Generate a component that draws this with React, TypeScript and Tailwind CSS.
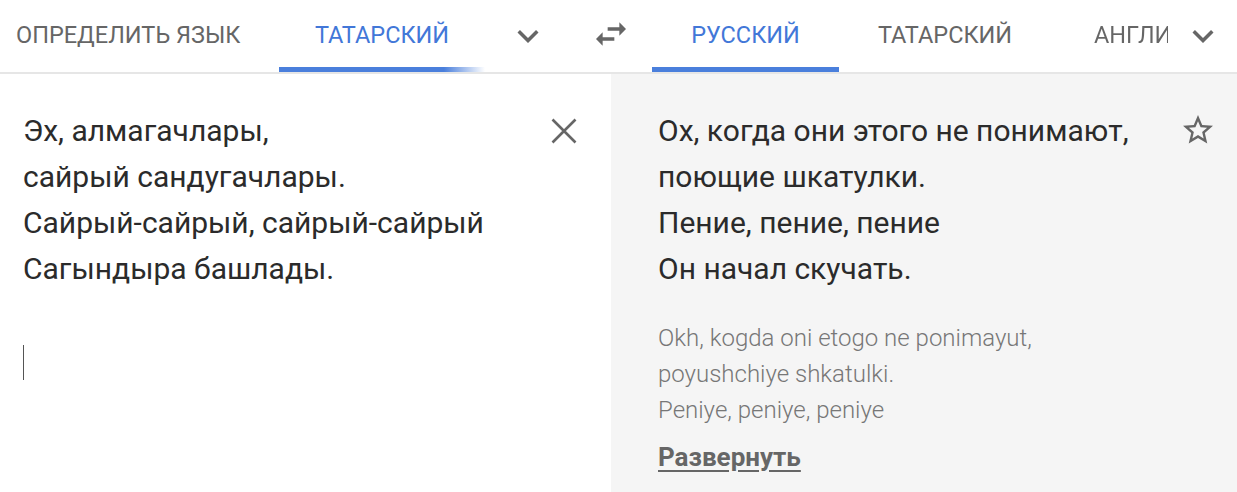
const sans = "font-['Roboto','Liberation_Sans',sans-serif]";

function Chevron() {
  return (
    <svg width="42" height="42" viewBox="0 0 24 24" fill="#666">
      <path d="M16.59 8.59L12 13.17 7.41 8.59 6 10l6 6 6-6z" />
    </svg>
  );
}

function SwapIcon() {
  return (
    <svg width="40" height="40" viewBox="0 0 24 24" fill="#666">
      <path d="M6.99 11L3 15l3.99 4v-3H14v-2H6.99v-3zM21 9l-4-4v3h-7v2h7v3l4-4z" />
    </svg>
  );
}

function CloseIcon() {
  return (
    <svg width="26" height="26" viewBox="0 0 26 26" stroke="#666" strokeWidth="2.6" fill="none">
      <path d="M1.5 1.5L24.5 24.5M24.5 1.5L1.5 24.5" />
    </svg>
  );
}

function StarIcon() {
  return (
    <svg width="36" height="36" viewBox="0 0 24 24" fill="#666">
      <path d="M22 9.24l-7.19-.62L12 2 9.19 8.63 2 9.24l5.46 4.73L5.82 21 12 17.27 18.18 21l-1.63-7.03L22 9.24zM12 15.4l-3.76 2.27 1-4.28-3.32-2.88 4.38-.38L12 6.1l1.71 4.04 4.38.38-3.32 2.88 1 4.28L12 15.4z" />
    </svg>
  );
}

const source = ["Эх, алмагачлары,", "сайрый сандугачлары.", "Сайрый-сайрый, сайрый-сайрый", "Сагындыра башлады."];
const target = ["Ох, когда они этого не понимают,", "поющие шкатулки.", "Пение, пение, пение", "Он начал скучать."];
const translit = ["Okh, kogda oni etogo ne ponimayut,", "poyushchiye shkatulki.", "Peniye, peniye, peniye"];

export default function App() {
  return (
    <div className={`${sans} w-[1237px] h-[492px] bg-white overflow-hidden flex flex-col`}>
      {/* language bar */}
      <div className="flex h-[74px] border-b-2 border-[#e6e6e6] text-[23.5px] font-normal uppercase text-[#666]">
        <div className="w-[611px] shrink-0 flex items-stretch">
          <div className="w-[279px] shrink-0 flex items-center pl-4 whitespace-nowrap">Определить язык</div>
          <div className="relative w-[206px] shrink-0 flex items-center justify-center text-[#4277d8]">
            Татарский
            <div className="absolute left-0 right-0 bottom-0 h-[5px] bg-linear-to-r from-[#4a7fdc] from-80% to-transparent" />
          </div>
          <div className="ml-[22px] shrink-0 flex items-center">
            <Chevron />
          </div>
          <div className="ml-[42px] shrink-0 flex items-center pb-1">
            <SwapIcon />
          </div>
        </div>
        <div className="flex-1 flex items-stretch">
          <div className="ml-[41px] relative w-[187px] shrink-0 flex items-center justify-center text-[#4277d8]">
            Русский
            <div className="absolute left-0 right-0 bottom-0 h-[5px] bg-[#4a7fdc]" />
          </div>
          <div className="w-[212px] shrink-0 flex items-center justify-center">Татарский</div>
          <div className="ml-[43px] w-[74px] shrink-0 overflow-hidden whitespace-nowrap flex items-center">
            <span className="bg-linear-to-r from-[#666] from-55% to-transparent to-90% bg-clip-text text-transparent">
              Английский
            </span>
          </div>
          <div className="ml-[14px] shrink-0 flex items-center">
            <Chevron />
          </div>
        </div>
      </div>

      {/* panels */}
      <div className="flex flex-1">
        <div className="w-[611px] shrink-0 bg-white pl-[23px] pr-[34px] pt-[34px] flex justify-between">
          <div className="flex flex-col">
            <div className="text-[30px] leading-[46px] text-[#2b2b2b]">
              {source.map((l) => (
                <div key={l}>{l}</div>
              ))}
            </div>
            <div className="mt-[53px] w-px h-[35px] bg-[#555]" />
          </div>
          <div className="pt-[10px]">
            <CloseIcon />
          </div>
        </div>
        <div className="flex-1 bg-[#f5f5f5] pl-[47px] pr-[21px] pt-[34px] flex justify-between">
          <div className="flex flex-col">
            <div className="text-[30px] leading-[46px] text-[#2b2b2b]">
              {target.map((l) => (
                <div key={l}>{l}</div>
              ))}
            </div>
            <div className="mt-[28px] text-[24px] leading-[36px] font-light text-[#777]">
              {translit.map((l) => (
                <div key={l}>{l}</div>
              ))}
            </div>
            <div className="mt-[11px] text-[26px] leading-[36px] font-bold text-[#666] underline underline-offset-4">
              Развернуть
            </div>
          </div>
          <div className="pt-[4px]">
            <StarIcon />
          </div>
        </div>
      </div>
    </div>
  );
}
